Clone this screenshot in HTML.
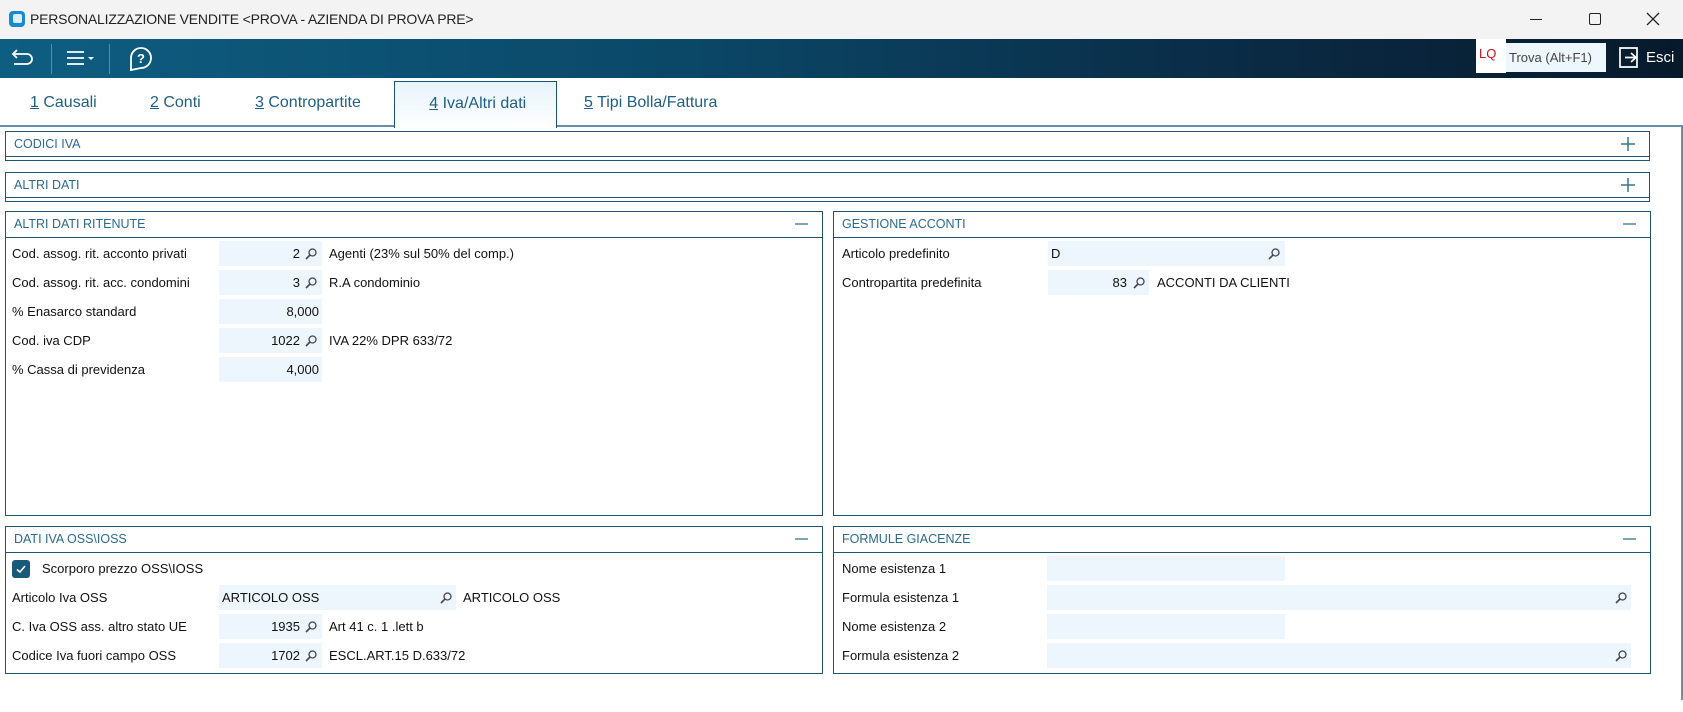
<!DOCTYPE html>
<html><head><meta charset="utf-8"><style>
*{margin:0;padding:0;box-sizing:border-box}
body{width:1683px;height:712px;background:#fff;font-family:"Liberation Sans",sans-serif;position:relative;overflow:hidden;color:#111}
.a{position:absolute}
.title{left:0;top:0;width:1683px;height:39px;background:#f3f3f3}
.tb{left:0;top:39px;width:1683px;height:39px;background:linear-gradient(90deg,#0e5e82 0%,#0b4868 40%,#0a2a44 75%,#071a2c 100%)}
.tab{top:81px;height:45px;font-size:16px;color:#1f5f85;line-height:44px}
.tab u{text-decoration:underline}
.box{border:1.5px solid #1d5470;background:#fff}
.hd{position:absolute;left:0;right:0;top:0;height:26px;border-bottom:1.5px solid #1d5470;font-size:12.5px;color:#2a6a8e;line-height:25px;padding-left:8px}
.lbl{font-size:13px;line-height:25px;color:#111}
.fld{background:#eef6fd;height:25px;font-size:13px;line-height:25px}
.r{text-align:right}
.minus{position:absolute;right:14px;top:11px;width:13px;height:2px;background:#7aa6b8}
</style></head><body>
<div class="a title"></div>
<div class="a" style="left:9px;top:11px;width:16px;height:16px;border-radius:4px;background:#1a8ad0"></div>
<div class="a" style="left:13px;top:14px;width:9px;height:9px;border-radius:2px;background:#fff;opacity:.85"></div>
<div class="a" style="left:30px;top:9px;font-size:14px;color:#222;line-height:20px;letter-spacing:-0.2px">PERSONALIZZAZIONE VENDITE &lt;PROVA - AZIENDA DI PROVA PRE&gt;</div>
<div class="a" style="left:1530px;top:19px;width:12px;height:1px;background:#222"></div>
<div class="a" style="left:1589px;top:13px;width:12px;height:12px;border:1.3px solid #222;border-radius:2px"></div>
<svg class="a" style="left:1646px;top:12px" width="14" height="14"><path d="M1 1L13 13M13 1L1 13" stroke="#222" stroke-width="1.3"/></svg>
<div class="a tb"></div>
<svg class="a" style="left:10px;top:45px" width="26" height="26" fill="none" stroke="#fff" stroke-width="1.8"><path d="M7 5L3 9L7 13M3 9H17a5 5 0 0 1 0 10H4"/></svg>
<div class="a" style="left:51px;top:44px;width:1px;height:30px;background:#5d8aa5"></div>
<svg class="a" style="left:64px;top:45px" width="40" height="26" fill="none" stroke="#fff" stroke-width="1.8"><path d="M3 7H20M3 13H20M3 19H20"/><path d="M24 12H30L27 15Z" fill="#fff" stroke="none"/></svg>
<div class="a" style="left:109px;top:44px;width:1px;height:30px;background:#5d8aa5"></div>
<svg class="a" style="left:128px;top:45px" width="28" height="28" fill="none" stroke="#fff" stroke-width="1.8"><path d="M3 25V13a10 10 0 1 1 10 10Z"/><text x="9" y="18" font-size="13" font-family="Liberation Sans" fill="#fff" stroke="none" font-weight="bold">?</text></svg>
<div class="a" style="left:1476px;top:39px;width:30px;height:34px;background:#fff;color:#c0141c;font-size:13px;line-height:30px;padding-left:3px">LQ</div>
<div class="a" style="left:1506px;top:43px;width:100px;height:29px;background:#eef7fd;color:#444;font-size:13px;line-height:29px;padding-left:3px">Trova (Alt+F1)</div>
<svg class="a" style="left:1617px;top:45px" width="26" height="26" fill="none" stroke="#fff" stroke-width="1.7"><path d="M3 3H20V22H3Z"/><path d="M8 12.5H19M14 8L19 12.5L14 17"/></svg>
<div class="a" style="left:1646px;top:45px;color:#fff;font-size:15px;line-height:26px">Esci</div>

<div class="a" style="left:0;top:125px;width:1682px;height:1.5px;background:#6a8ea5"></div>
<div class="a" style="left:1681px;top:125px;width:1.5px;height:575px;background:#6a8ea5"></div>
<div class="a tab" style="left:30px"><u>1</u> Causali</div>
<div class="a tab" style="left:150px"><u>2</u> Conti</div>
<div class="a tab" style="left:255px"><u>3</u> Contropartite</div>
<div class="a tab" style="left:394px;width:163px;border:1.5px solid #1d5470;border-bottom:none;background:linear-gradient(#e6f3fb,#fff);text-align:center;height:47px">&nbsp;<u>4</u> Iva/Altri dati</div>
<div class="a tab" style="left:584px"><u>5</u> Tipi Bolla/Fattura</div>

<div class="a box" style="left:5px;top:131px;width:1645px;height:30px"><div class="hd" style="height:25px">CODICI IVA</div>
<svg class="a" style="right:14px;top:5px" width="14" height="14"><path d="M7 0V14M0 7H14" stroke="#3a7590" stroke-width="1.5"/></svg></div>
<div class="a box" style="left:5px;top:172px;width:1645px;height:30px"><div class="hd" style="height:25px">ALTRI DATI</div>
<svg class="a" style="right:14px;top:5px" width="14" height="14"><path d="M7 0V14M0 7H14" stroke="#3a7590" stroke-width="1.5"/></svg></div>

<div class="a box" style="left:5px;top:211px;width:818px;height:305px"><div class="hd">ALTRI DATI RITENUTE</div><div class="minus"></div></div>
<div class="a box" style="left:833px;top:211px;width:818px;height:305px"><div class="hd">GESTIONE ACCONTI</div><div class="minus"></div></div>
<div class="a box" style="left:5px;top:526px;width:818px;height:148px"><div class="hd">DATI IVA OSS\IOSS</div><div class="minus"></div></div>
<div class="a box" style="left:833px;top:526px;width:818px;height:148px"><div class="hd">FORMULE GIACENZE</div><div class="minus"></div></div>

<div class="a lbl" style="left:12px;top:241px">Cod. assog. rit. acconto privati</div>
<div class="a fld r" style="left:219px;top:241px;width:103px;padding-right:22px">2</div>
<div class="a lbl" style="left:329px;top:241px">Agenti (23% sul 50% del comp.)</div>
<div class="a lbl" style="left:12px;top:270px">Cod. assog. rit. acc. condomini</div>
<div class="a fld r" style="left:219px;top:270px;width:103px;padding-right:22px">3</div>
<div class="a lbl" style="left:329px;top:270px">R.A condominio</div>
<div class="a lbl" style="left:12px;top:299px">% Enasarco standard</div>
<div class="a fld r" style="left:219px;top:299px;width:103px;padding-right:3px">8,000</div>
<div class="a lbl" style="left:12px;top:328px">Cod. iva CDP</div>
<div class="a fld r" style="left:219px;top:328px;width:103px;padding-right:22px">1022</div>
<div class="a lbl" style="left:329px;top:328px">IVA 22% DPR 633/72</div>
<div class="a lbl" style="left:12px;top:357px">% Cassa di previdenza</div>
<div class="a fld r" style="left:219px;top:357px;width:103px;padding-right:3px">4,000</div>

<div class="a lbl" style="left:842px;top:241px">Articolo predefinito</div>
<div class="a fld" style="left:1048px;top:241px;width:237px;padding-left:3px">D</div>
<div class="a lbl" style="left:842px;top:270px">Contropartita predefinita</div>
<div class="a fld r" style="left:1048px;top:270px;width:101px;padding-right:22px">83</div>
<div class="a lbl" style="left:1157px;top:270px">ACCONTI DA CLIENTI</div>

<div class="a" style="left:12px;top:560px;width:18px;height:18px;border-radius:3px;background:#195a7a"></div>
<svg class="a" style="left:12px;top:560px" width="18" height="18"><path d="M5 9.5L8 12L13 6" stroke="#fff" stroke-width="1.6" fill="none"/></svg>
<div class="a lbl" style="left:42px;top:556px">Scorporo prezzo OSS\IOSS</div>
<div class="a lbl" style="left:12px;top:585px">Articolo Iva OSS</div>
<div class="a fld" style="left:219px;top:585px;width:237px;padding-left:3px">ARTICOLO OSS</div>
<div class="a lbl" style="left:463px;top:585px">ARTICOLO OSS</div>
<div class="a lbl" style="left:12px;top:614px">C. Iva OSS ass. altro stato UE</div>
<div class="a fld r" style="left:219px;top:614px;width:103px;padding-right:22px">1935</div>
<div class="a lbl" style="left:329px;top:614px">Art 41 c. 1 .lett b</div>
<div class="a lbl" style="left:12px;top:643px">Codice Iva fuori campo OSS</div>
<div class="a fld r" style="left:219px;top:643px;width:103px;padding-right:22px">1702</div>
<div class="a lbl" style="left:329px;top:643px">ESCL.ART.15 D.633/72</div>

<div class="a lbl" style="left:842px;top:556px">Nome esistenza 1</div>
<div class="a fld" style="left:1047px;top:556px;width:238px"></div>
<div class="a lbl" style="left:842px;top:585px">Formula esistenza 1</div>
<div class="a fld" style="left:1047px;top:585px;width:584px"></div>
<div class="a lbl" style="left:842px;top:614px">Nome esistenza 2</div>
<div class="a fld" style="left:1047px;top:614px;width:238px"></div>
<div class="a lbl" style="left:842px;top:643px">Formula esistenza 2</div>
<div class="a fld" style="left:1047px;top:643px;width:584px"></div>

<svg width="0" height="0" style="position:absolute"><defs><g id="m"><circle cx="7.5" cy="4.5" r="3.5" fill="none" stroke="#445" stroke-width="1.3"/><path d="M5 7L1 11" stroke="#445" stroke-width="1.6"/></g></defs></svg>
<svg class="a" style="left:305px;top:248px" width="12" height="12"><use href="#m"/></svg>
<svg class="a" style="left:305px;top:277px" width="12" height="12"><use href="#m"/></svg>
<svg class="a" style="left:305px;top:335px" width="12" height="12"><use href="#m"/></svg>
<svg class="a" style="left:1268px;top:248px" width="12" height="12"><use href="#m"/></svg>
<svg class="a" style="left:1133px;top:277px" width="12" height="12"><use href="#m"/></svg>
<svg class="a" style="left:440px;top:592px" width="12" height="12"><use href="#m"/></svg>
<svg class="a" style="left:305px;top:621px" width="12" height="12"><use href="#m"/></svg>
<svg class="a" style="left:305px;top:650px" width="12" height="12"><use href="#m"/></svg>
<svg class="a" style="left:1615px;top:592px" width="12" height="12"><use href="#m"/></svg>
<svg class="a" style="left:1615px;top:650px" width="12" height="12"><use href="#m"/></svg>
</body></html>
